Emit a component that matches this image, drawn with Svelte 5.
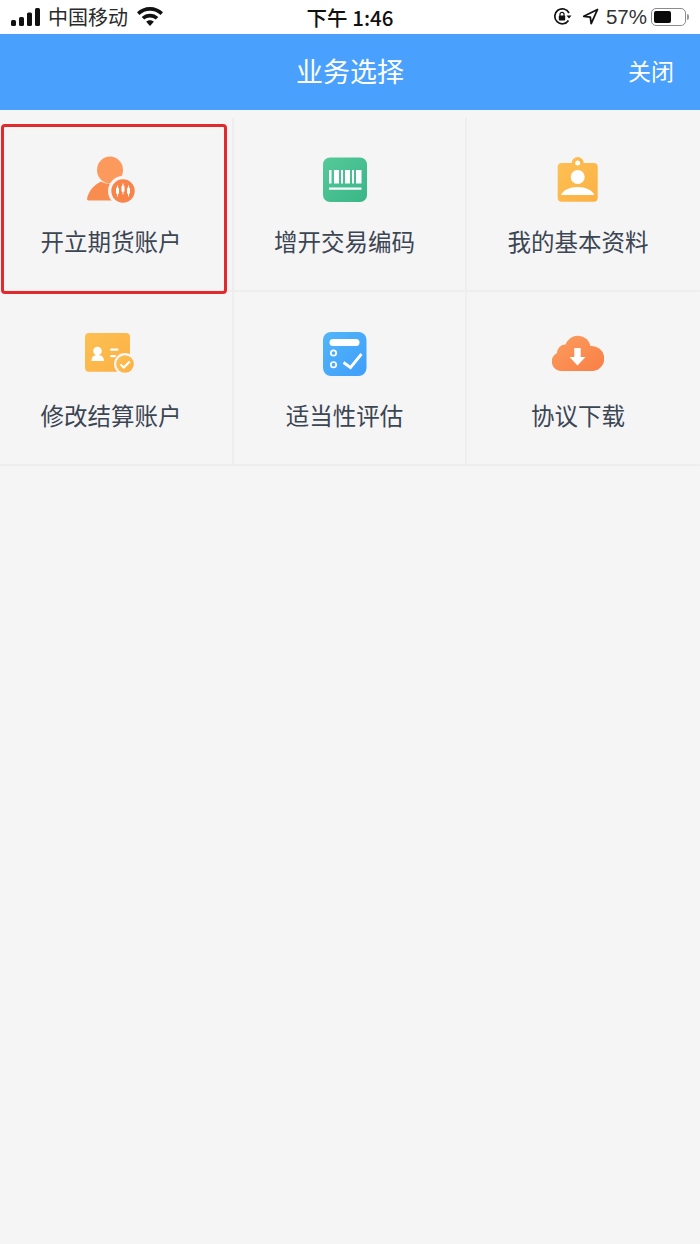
<script>
	const services = [
		{ key: 'open', label: '开立期货账户' },
		{ key: 'code', label: '增开交易编码' },
		{ key: 'profile', label: '我的基本资料' },
		{ key: 'settle', label: '修改结算账户' },
		{ key: 'assess', label: '适当性评估' },
		{ key: 'download', label: '协议下载' }
	];
</script>

{#snippet icon(key)}
	<svg class="icon" viewBox="0 0 52 50" width="52" height="50" aria-hidden="true">
		<defs>
			<linearGradient id="orange-{key}" x1="0" y1="0" x2="1" y2="1">
				<stop offset="0" stop-color="#fc9d5f" />
				<stop offset="1" stop-color="#f97f45" />
			</linearGradient>
			<linearGradient id="yellow-{key}" x1="0" y1="0" x2="1" y2="1">
				<stop offset="0" stop-color="#fdc053" />
				<stop offset="1" stop-color="#fcb044" />
			</linearGradient>
			<linearGradient id="green-{key}" x1="0" y1="0" x2="1" y2="1">
				<stop offset="0" stop-color="#56c99a" />
				<stop offset="1" stop-color="#39b686" />
			</linearGradient>
			<linearGradient id="blue-{key}" x1="0" y1="0" x2="1" y2="1">
				<stop offset="0" stop-color="#52b6f8" />
				<stop offset="1" stop-color="#3f9efb" />
			</linearGradient>
		</defs>
		{#if key === 'open'}
			<ellipse cx="25" cy="14" rx="13" ry="13.500" fill="#fb9a5c" />
			<path d="M2 43c1.500-8 7-14 14-17.500 5 3 13 3 18 0 4 2 7 5 8 9v10H5c-2 0-3-.5-3-1.500z" fill="#f98d50" />
			<circle cx="38" cy="35" r="15" fill="#f5f5f6" />
			<circle cx="38" cy="35" r="11.700" fill="#f8844a" />
			<g stroke="#fff" stroke-width="1">
				<path d="M32.500 29.500v11" />
				<path d="M38 27.500v11" />
				<path d="M43.500 29.500v11" />
			</g>
			<g fill="#fff">
				<rect x="31" y="31.500" width="3" height="6.500" rx="1.200" />
				<rect x="36.500" y="29.500" width="3" height="6.500" rx="1.200" />
				<rect x="42" y="31.500" width="3" height="6.500" rx="1.200" />
			</g>
		{:else if key === 'code'}
			<rect x="4" y="1.500" width="44" height="44.500" rx="7" fill="url(#green-code)" />
			<g fill="#fff">
				<rect x="10" y="14" width="2.500" height="13.500" />
				<rect x="15" y="14" width="5" height="13.500" />
				<rect x="22" y="14" width="2" height="13.500" />
				<rect x="26" y="14" width="5" height="13.500" />
				<rect x="33" y="14" width="2" height="13.500" />
				<rect x="37" y="14" width="5.500" height="13.500" />
				<rect x="10" y="31.500" width="32.500" height="2.200" />
			</g>
		{:else if key === 'profile'}
			<circle cx="25.700" cy="7" r="6" fill="url(#yellow-profile)" />
			<rect x="5.700" y="7" width="40" height="38.700" rx="4" fill="url(#yellow-profile)" />
			<circle cx="25.700" cy="7" r="2.500" fill="#fff" />
			<circle cx="25.700" cy="21" r="7" fill="#fff" />
			<path d="M9 39c2-5 9-8 16.700-8s14.700 3 16.700 8z" fill="#fff" />
		{:else if key === 'settle'}
			<rect x="0" y="3" width="45" height="38.700" rx="4" fill="url(#yellow-settle)" />
			<circle cx="12.500" cy="21" r="4.300" fill="#fff" />
			<path d="M6.500 31c0-4 2-6 6-6s6.500 2 6.500 6z" fill="#fff" />
			<rect x="25" y="18.500" width="8.500" height="2.200" rx="1.100" fill="#fff" />
			<rect x="25" y="25" width="6" height="2.200" rx="1.100" fill="#fff" />
			<circle cx="40" cy="34" r="11" fill="#f5f5f6" />
			<circle cx="40" cy="34" r="8.800" fill="url(#yellow-settle)" />
			<path d="M35.500 34.500l3.300 3 6-6" fill="none" stroke="#fff" stroke-width="2.200" />
		{:else if key === 'assess'}
			<rect x="4" y="2" width="43.500" height="44" rx="8" fill="url(#blue-assess)" />
			<rect x="10.500" y="9" width="30" height="7" rx="3.500" fill="#fff" />
			<circle cx="14.500" cy="23" r="2.700" fill="none" stroke="#fff" stroke-width="1.700" />
			<circle cx="14.500" cy="34.700" r="2.700" fill="none" stroke="#fff" stroke-width="1.700" />
			<path d="M24.500 32.500l7 5 11-13.500" fill="none" stroke="#fff" stroke-width="2.800" />
		{:else}
			<path d="M9.500 41A9.500 9.500 0 0 1 5 23 8.500 8.500 0 0 1 13.500 14.500 13 13 0 0 1 38.500 16 12.500 12.500 0 0 1 41 41z" fill="url(#orange-download)" />
			<path d="M22.300 18h6.400v9h4.800L25.500 35.500 17.500 27h4.800z" fill="#fff" />
		{/if}
	</svg>
{/snippet}

<div class="page">
	<div class="status">
		<div class="status-left">
			<svg width="29" height="18" viewBox="0 0 29 18" aria-hidden="true">
				<rect x="0" y="12" width="5" height="6" rx="1.500" />
				<rect x="8" y="9" width="5" height="9" rx="1.500" />
				<rect x="16" y="4.500" width="5" height="13.500" rx="1.500" />
				<rect x="24" y="0" width="5" height="18" rx="1.500" />
			</svg>
			<span class="carrier">中国移动</span>
			<svg class="wifi" width="26" height="19" viewBox="0 0 26 19" aria-hidden="true">
				<path d="M13 0c5 0 9.500 2 13 5.300l-2.400 2.600C20.700 5.200 17 3.700 13 3.700S5.300 5.200 2.400 7.900L0 5.300C3.500 2 8 0 13 0z" />
				<path d="M13 6.700c3.200 0 6 1.200 8.300 3.300l-2.500 2.600C17.200 11.200 15.200 10.400 13 10.400s-4.200.8-5.800 2.200L4.700 10C7 7.900 9.800 6.700 13 6.700z" />
				<path d="M13 13.300c1.500 0 2.800.5 3.800 1.500L13 19l-3.800-4.200c1-1 2.300-1.500 3.800-1.500z" />
			</svg>
		</div>
		<div class="time">下午 1:46</div>
		<div class="status-right">
			<svg width="19" height="19" viewBox="0 0 19 19" aria-hidden="true">
				<path d="M15.500 13.500A7.500 7.500 0 1 1 16 6" fill="none" stroke="#111" stroke-width="1.700" />
				<path d="M13.500 8.500h5L16 11.500z" />
				<rect x="5.800" y="8.500" width="6.400" height="5" rx="1" />
				<path d="M7 9V7.300a2 2 0 0 1 4 0V9" fill="none" stroke="#111" stroke-width="1.200" />
			</svg>
			<svg class="arrow" width="17" height="17" viewBox="0 0 17 17" aria-hidden="true">
				<path d="M15.500 1.500L1.800 8.300l6.500.8.900 6.500z" fill="none" stroke="#111" stroke-width="1.800" stroke-linejoin="round" />
			</svg>
			<span class="percent">57%</span>
			<div class="battery"><div class="battery-level" style="width: 57%"></div></div>
			<div class="battery-nub"></div>
		</div>
	</div>

	<header class="nav">
		<h1>业务选择</h1>
		<span class="close">关闭</span>
	</header>

	<div class="grid">
		{#each services as item, i}
			<div class="cell">
				{@render icon(item.key)}
				<span class="label">{item.label}</span>
				{#if i === 0}
					<div class="selected"></div>
				{/if}
			</div>
		{/each}
	</div>
</div>

<style>
	:global(body) {
		background: #f5f5f6;
	}

	.page {
		width: 700px;
		height: 1244px;
		overflow: hidden;
		background: #f5f5f6;
		font-family: "Noto Sans CJK SC", "Liberation Sans", sans-serif;
	}

	.status {
		height: 34px;
		background: #fff;
		display: grid;
		grid-template-columns: 1fr auto 1fr;
		align-items: center;
		color: #111;
		font-size: 20px;
	}

	.status svg {
		fill: #111;
		display: block;
	}

	.status-left {
		display: flex;
		align-items: center;
		padding-left: 11px;
		margin-top: -1px;
	}

	.carrier {
		margin-left: 8px;
		line-height: 34px;
		color: #2a2a2a;
	}

	.wifi {
		margin-left: 9px;
	}

	.time {
		font-size: 20.500px;
		font-weight: 500;
		line-height: 34px;
		margin-top: -1px;
	}

	.status-right {
		display: flex;
		align-items: center;
		justify-content: flex-end;
		padding-right: 11px;
		margin-top: -1px;
	}

	.arrow {
		margin-left: 10px;
	}

	.percent {
		margin-left: 7px;
		font-family: "Liberation Sans", sans-serif;
		font-size: 20.500px;
		color: #333;
	}

	.battery {
		margin-left: 4px;
		width: 35px;
		height: 18px;
		box-sizing: border-box;
		border: 1.500px solid #8b8b8b;
		border-radius: 5px;
		padding: 2px;
	}

	.battery-level {
		height: 100%;
		background: #0a0a0a;
		border-radius: 2px;
	}

	.battery-nub {
		width: 2px;
		height: 6px;
		margin-left: 1px;
		background: #9a9a9a;
		border-radius: 0 2px 2px 0;
	}

	.nav {
		height: 76px;
		box-sizing: border-box;
		padding-bottom: 3px;
		background: #4aa0fd;
		display: flex;
		align-items: center;
		justify-content: center;
		position: relative;
		color: #fff;
	}

	.nav h1 {
		margin: 0;
		font-size: 27px;
		font-weight: 400;
		line-height: 73px;
	}

	.close {
		position: absolute;
		right: 26px;
		top: 0;
		font-size: 23px;
		line-height: 73px;
	}

	.grid {
		margin-top: 8px;
		display: grid;
		grid-template-columns: repeat(3, 233.500px);
		grid-auto-rows: 174px;
	}

	.cell {
		position: relative;
		box-sizing: border-box;
		display: flex;
		flex-direction: column;
		align-items: center;
		padding: 38px 9.500px 0 0;
		border-right: 2px solid #eeeeef;
		border-bottom: 2px solid #eeeeef;
	}

	.cell:nth-child(3n) {
		border-right-color: transparent;
	}

	.icon {
		display: block;
	}

	.label {
		margin-top: 20px;
		font-size: 23.500px;
		line-height: 30px;
		color: #3c4552;
		white-space: nowrap;
	}

	.selected {
		position: absolute;
		left: 1px;
		top: 6px;
		width: 226px;
		height: 170px;
		box-sizing: border-box;
		border: 3px solid #e2292b;
		border-radius: 4px;
	}
</style>
